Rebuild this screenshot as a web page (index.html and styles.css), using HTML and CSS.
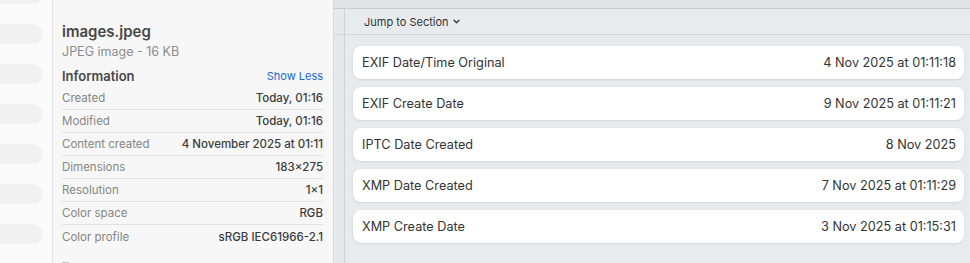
FILE: index.html
```html
<!DOCTYPE html>
<html lang="en">
<head>
  <meta charset="UTF-8" />
  <title>images.jpeg – Metadata</title>
  <link rel="stylesheet" href="styles.css">
</head>
<body>
  <div class="sidebar">
    <div class="pills">
      <div class="pill"></div>
      <div class="pill"></div>
      <div class="pill"></div>
      <div class="pill"></div>
      <div class="pill"></div>
      <div class="pill"></div>
      <div class="pill"></div>
    </div>
  </div>

  <div class="inspector">
    <div class="file-name">images.jpeg</div>
    <div class="file-kind">JPEG image - 16 KB</div>
    <div class="info-head">
      <span class="info-title">Information</span>
      <a class="show-less" href="#">Show Less</a>
    </div>
    <div class="info-row"><span class="key">Created</span><span class="val">Today, 01:16</span></div>
    <div class="info-row"><span class="key">Modified</span><span class="val">Today, 01:16</span></div>
    <div class="info-row"><span class="key">Content created</span><span class="val">4 November 2025 at 01:11</span></div>
    <div class="info-row"><span class="key">Dimensions</span><span class="val">183×275</span></div>
    <div class="info-row"><span class="key">Resolution</span><span class="val">1×1</span></div>
    <div class="info-row"><span class="key">Color space</span><span class="val">RGB</span></div>
    <div class="info-row last"><span class="key">Color profile</span><span class="val">sRGB IEC61966-2.1</span></div>
    <div class="tags-box"></div>
  </div>

  <div class="main">
    <div class="top-band"></div>
    <div class="main-body">
      <div class="gutter">
        <div class="gutter-cell"></div>
      </div>
      <div class="content">
        <div class="toolbar">
          <button class="jump">Jump to Section
            <svg width="7" height="5" viewBox="0 0 7 5"><path d="M1 1.2 L3.5 3.7 L6 1.2" fill="none" stroke="#333" stroke-width="1.3" stroke-linecap="round" stroke-linejoin="round"/></svg>
          </button>
        </div>
        <div class="cards">
          <div class="card"><span>EXIF Date/Time Original</span><span>4 Nov 2025 at 01:11:18</span></div>
          <div class="card"><span>EXIF Create Date</span><span>9 Nov 2025 at 01:11:21</span></div>
          <div class="card"><span>IPTC Date Created</span><span>8 Nov 2025</span></div>
          <div class="card"><span>XMP Date Created</span><span>7 Nov 2025 at 01:11:29</span></div>
          <div class="card"><span>XMP Create Date</span><span>3 Nov 2025 at 01:15:31</span></div>
        </div>
      </div>
    </div>
  </div>
</body>
</html>
```

FILE: styles.css
```css
* { box-sizing: border-box; }
body {
  margin: 0; height: 263px; overflow: hidden;
  display: flex;
  font-family: Inter, "Liberation Sans", sans-serif;
  color: #333;
  background: #e8ebee;
}

/* left sidebar with placeholder pills */
.sidebar {
  width: 53px; flex: none;
  background: #fafafa; border-right: 1px solid #e4e4e4;
  overflow: hidden;
}
.pills { display: flex; flex-direction: column; gap: 20px; margin-top: -16px; }
.pill { width: 42px; height: 20px; background: #f1f1f2; border-radius: 0 9px 9px 0; }

/* file inspector */
.inspector {
  width: 281px; flex: none;
  background: #f7f7f7; border-right: 1px solid #d9d9d9;
  padding: 23px 10px 0 9px;
  overflow: hidden;
}
.file-name { font-size: 15px; line-height: 18px; font-weight: 600; color: #474747; }
.file-kind { font-size: 12.5px; line-height: 16px; color: #8c8c8c; margin-top: 3px; }
.info-head {
  display: flex; justify-content: space-between; align-items: center;
  height: 18px; margin-top: 7px; margin-bottom: 2px;
}
.info-title { font-size: 13px; font-weight: 600; color: #484848; }
.show-less { font-size: 11px; color: #1767d6; text-decoration: none; }
.info-row {
  display: flex; justify-content: space-between; align-items: center;
  height: 23px; border-bottom: 1px solid #e2e2e2;
  font-size: 11.5px;
}
.info-row.last { border-bottom: none; }
.key { color: #858585; }
.val { color: #3b3b3b; font-weight: 500; }
.tags-box { width: 7px; height: 8px; margin-top: 14px; border-top: 1px solid #c8c8c8; }

/* main metadata area */
.main { flex: 1; display: flex; flex-direction: column; }
.top-band { height: 9px; background: #e1e4e7; border-bottom: 1px solid #c9ccd0; flex: none; }
.main-body { flex: 1; display: flex; }
.gutter { width: 11px; flex: none; background: #e6e8eb; border-right: 1px solid #cfd2d5; }
.gutter-cell { height: 26px; border-bottom: 1px solid #d3d6d9; }
.content { flex: 1; }
.toolbar {
  height: 26px; border-bottom: 1px solid #d3d6d9;
  display: flex; align-items: center; padding-left: 19px;
}
.jump {
  border: none; background: none; padding: 0;
  font-family: inherit; font-size: 11px; color: #333;
  display: flex; align-items: center; gap: 4px;
}
.cards { display: flex; flex-direction: column; gap: 8px; padding: 11px 6px 0 8px; }
.card {
  height: 33px; background: #fff; border-radius: 8px;
  box-shadow: 0 1px 2px rgba(0,0,0,0.08), -1px 0 3px rgba(0,0,0,0.04);
  display: flex; justify-content: space-between; align-items: center;
  padding: 0 8px 0 9px;
  font-size: 12.7px; color: #333;
}
```
